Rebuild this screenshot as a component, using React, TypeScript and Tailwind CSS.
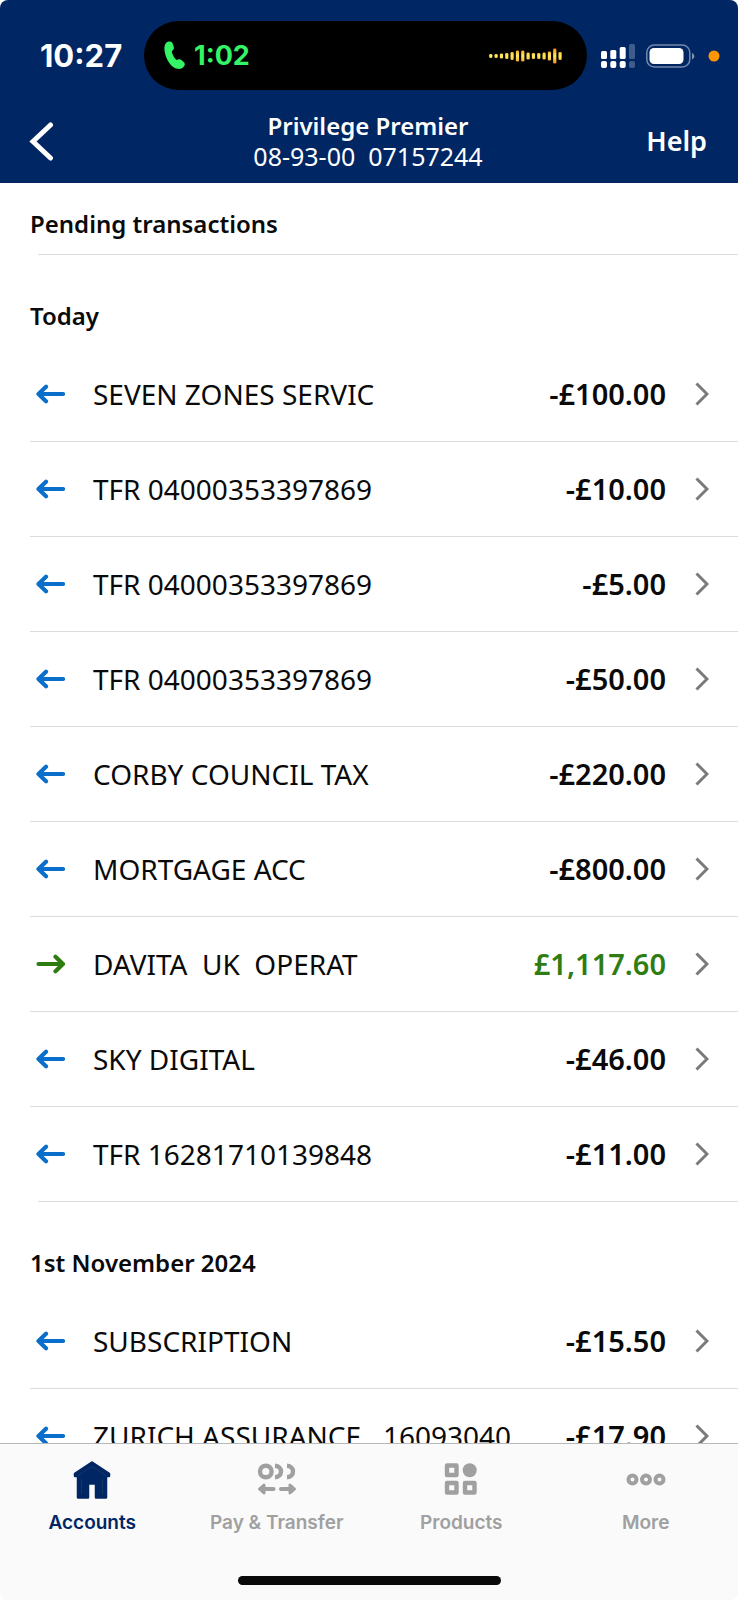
import type { ReactNode } from "react";

type Transaction = { name: string; amount: string; credit?: boolean };

const TODAY: Transaction[] = [
  { name: "SEVEN ZONES SERVIC", amount: "-£100.00" },
  { name: "TFR 04000353397869", amount: "-£10.00" },
  { name: "TFR 04000353397869", amount: "-£5.00" },
  { name: "TFR 04000353397869", amount: "-£50.00" },
  { name: "CORBY COUNCIL TAX", amount: "-£220.00" },
  { name: "MORTGAGE ACC", amount: "-£800.00" },
  { name: "DAVITA  UK  OPERAT", amount: "£1,117.60", credit: true },
  { name: "SKY DIGITAL", amount: "-£46.00" },
  { name: "TFR 16281710139848", amount: "-£11.00" },
];

const NOVEMBER: Transaction[] = [
  { name: "SUBSCRIPTION", amount: "-£15.50" },
  { name: "ZURICH ASSURANCE   16093040", amount: "-£17.90" },
];

const LEVELS = [4, 4, 5, 6, 8, 11, 11, 7, 6, 6, 7, 9, 15, 8];

function Waveform() {
  return (
    <svg width="76" height="20" viewBox="0 0 76 20" aria-hidden="true">
      <defs>
        <linearGradient id="wave" gradientUnits="userSpaceOnUse" x1="0" y1="2" x2="0" y2="18">
          <stop offset="0" stopColor="#f58a0a" />
          <stop offset="0.5" stopColor="#ffee62" />
          <stop offset="1" stopColor="#f58a0a" />
        </linearGradient>
      </defs>
      {LEVELS.map((h, i) => (
        <rect key={i} x={1.2 + i * 5.33} y={10 - h / 2} width="3.2" height={h} rx="1.3" fill="url(#wave)" />
      ))}
    </svg>
  );
}

function StatusBar() {
  return (
    <div className="flex h-[111px] items-center pl-10 pr-4">
      <span className="w-[104px] shrink-0 font-['Inter',sans-serif] text-[31px] leading-8 font-bold">10:27</span>
      <div className="flex h-[69px] flex-1 items-center justify-between rounded-full bg-black pl-5 pr-[23px]">
        <span className="flex items-center gap-[9px] font-['Inter',sans-serif] text-[27px] leading-8 font-bold text-[#33f565]">
          <svg width="21" height="29" viewBox="0 0 21 29" fill="currentColor" aria-hidden="true">
            <path d="M4.6.6C6.9-.1 8.200.9 8.800 2.800l1 3.500c.3 1.300-.2 2.300-1.300 3.200-.8.700-.8 1.400-.4 2.400.9 2.400 2.100 4.600 3.600 6.300.7.800 1.300.9 2.200.400 1.300-.7 2.500-.6 3.500.3l2.300 2.100c1.300 1.200 1.400 2.500.5 4-1.300 2.200-3.800 3.300-6.500 2.800C9.200 27.100 5.100 22.600 2.800 17.400.8 12.900-.1 8.100.7 4.700 1.200 2.600 2.600 1.200 4.600.6Z" />
          </svg>
          1:02
        </span>
        <Waveform />
      </div>
      <svg className="ml-[13px]" width="122" height="28" viewBox="0 0 122 28" aria-hidden="true">
        <g fill="#fff">
          <rect x="1" y="9" width="6" height="8" rx="1.500" />
          <rect x="10.300" y="8" width="6" height="9" rx="1.500" />
          <rect x="19.700" y="5" width="6" height="12" rx="1.500" />
          <rect x="1" y="19" width="6" height="7" rx="2" />
          <rect x="10.300" y="19" width="6" height="7" rx="2" />
          <rect x="19.700" y="19" width="6" height="7" rx="2" />
          <rect x="29" y="2" width="6" height="15" rx="1.500" opacity=".25" />
          <rect x="29" y="19" width="6" height="7" rx="2" opacity=".25" />
          <rect x="49.500" y="6" width="34" height="16" rx="4.500" />
          <path d="M92 11v6.500c1.600-.7 2.300-1.800 2.300-3.200S93.600 11.700 92 11Z" opacity=".5" />
        </g>
        <rect x="46.800" y="3" width="43" height="22" rx="7.500" fill="none" stroke="#fff" strokeWidth="1.500" opacity=".45" />
        <circle cx="114" cy="14" r="5.500" fill="#ff9500" />
      </svg>
    </div>
  );
}

function Header() {
  return (
    <header className="shrink-0 rounded-t-lg bg-[#002663] text-white">
      <StatusBar />
      <div className="grid grid-cols-[1fr_auto_1fr] items-center pb-3 pl-[29px] pr-[31px]">
        <button type="button" aria-label="Back" className="justify-self-start">
          <svg width="26" height="40" viewBox="0 0 26 40" fill="none" stroke="#fff" strokeWidth="5" strokeLinecap="round" aria-hidden="true">
            <path d="M21.500 4 4 20.500 21.500 37" strokeLinejoin="miter" />
          </svg>
        </button>
        <div className="text-center">
          <h1 className="text-2xl leading-[30px] font-semibold">Privilege Premier</h1>
          <p className="text-[25px] leading-[30px] whitespace-pre">08-93-00  07157244</p>
        </div>
        <button type="button" className="justify-self-end text-[27px] leading-8 font-semibold">
          Help
        </button>
      </div>
    </header>
  );
}

function Arrow({ credit }: { credit?: boolean }) {
  return (
    <svg
      width="30"
      height="20"
      viewBox="0 0 30 20"
      fill="none"
      stroke={credit ? "#2f7d12" : "#0a6fca"}
      strokeWidth="4.200"
      strokeLinecap="round"
      strokeLinejoin="round"
      aria-hidden="true"
    >
      <path d={credit ? "M3.500 10H28M20.500 2.800 28 10l-7.500 7.200" : "M28 10H3.500M11 2.800 3.500 10 11 17.200"} />
    </svg>
  );
}

function TransactionRow({ name, amount, credit }: Transaction) {
  return (
    <li className="group">
      <a href="#transaction" className="flex h-[94px] items-center pl-[35px] pr-[29px]">
        <Arrow credit={credit} />
        <span className="ml-7 flex-1 text-[28px] leading-9 whitespace-pre">{name}</span>
        <span className={`text-[29px] leading-9 font-semibold ${credit ? "text-[#2f7d12]" : ""}`}>{amount}</span>
        <svg className="ml-[29px]" width="14" height="24" viewBox="0 0 14 24" fill="none" stroke="#7a7a7a" strokeWidth="3" aria-hidden="true">
          <path d="M1.500 1.500 12 12 1.500 22.500" />
        </svg>
      </a>
      <div className="ml-[30px] h-px bg-[#dcdcdc] group-last:ml-[38px]" />
    </li>
  );
}

function Section({ title, items }: { title: string; items: Transaction[] }) {
  return (
    <section className="pt-[45px]">
      <h2 className="px-[30px] pb-[15px] text-2xl leading-8 font-semibold">{title}</h2>
      <ul>
        {items.map((item, i) => (
          <TransactionRow key={i} {...item} />
        ))}
      </ul>
    </section>
  );
}

function Tab({ label, active, children }: { label: string; active?: boolean; children: ReactNode }) {
  return (
    <a
      href={`#${label}`}
      aria-current={active ? "page" : undefined}
      className={`flex flex-col items-center gap-[11px] ${active ? "text-[#002663]" : "text-[#a0a0a0]"}`}
    >
      <svg width="40" height="40" viewBox="0 0 40 40" aria-hidden="true">
        {children}
      </svg>
      <span className="font-['Inter',sans-serif] text-[19px] leading-6 font-semibold">{label}</span>
    </a>
  );
}

function TabBar() {
  return (
    <nav className="shrink-0 rounded-b-lg border-t border-[#b8b8b8] bg-[#fafafa] pt-4 pb-[15px]">
      <div className="grid grid-cols-4">
        <Tab label="Accounts" active>
          <path
            d="M20 2.500 3 13.800v2.200h3V37.500h10V23.500h8v14h10V16h3v-2.200Z"
            fill="currentColor"
            stroke="currentColor"
            strokeWidth="2.500"
            strokeLinejoin="round"
          />
          <path d="M6.500 15 20 6.500 33.500 15M9.500 19v15M30.500 19v15" fill="none" stroke="#fff" strokeWidth=".5" opacity=".15" />
        </Tab>
        <Tab label="Pay & Transfer">
          <g fill="none" stroke="currentColor" strokeWidth="4.400">
            <circle cx="8.800" cy="11.500" r="5.800" />
            <path d="M18 5.700c3.700.2 6 2.600 6 5.800s-2.300 5.600-6 5.800M30 5.700c3.700.2 6 2.600 6 5.800s-2.300 5.600-6 5.800" />
            <path d="M16.500 29H5M24 29h11" strokeLinecap="round" strokeWidth="4" />
          </g>
          <path
            d="M7 25v8L2.500 29ZM33 25v8l4.500-4Z"
            fill="currentColor"
            stroke="currentColor"
            strokeWidth="3"
            strokeLinejoin="round"
          />
        </Tab>
        <Tab label="Products">
          <g fill="none" stroke="currentColor" strokeWidth="4.400" strokeLinejoin="round">
            <rect x="6" y="5.500" width="9.500" height="9.500" />
            <rect x="6" y="23" width="9.500" height="9.500" />
            <rect x="24" y="23" width="9.500" height="9.500" />
          </g>
          <circle cx="28.700" cy="10.300" r="7" fill="currentColor" />
        </Tab>
        <Tab label="More">
          <g fill="none" stroke="currentColor" strokeWidth="4">
            <circle cx="6.500" cy="19.500" r="4" />
            <circle cx="20" cy="19.500" r="4" />
            <circle cx="33.500" cy="19.500" r="4" />
          </g>
        </Tab>
      </div>
      <div className="mx-auto mt-[41px] h-[9px] w-[263px] rounded-full bg-[#0a0a0a]" />
    </nav>
  );
}

export default function App() {
  return (
    <div className="flex h-screen flex-col bg-white font-['Noto_Sans',sans-serif] text-[#0a0a0a]">
      <Header />
      <main className="min-h-0 flex-1 overflow-y-auto [scrollbar-width:none]">
        <h2 className="px-[30px] pt-[25px] pb-[14px] text-2xl leading-8 font-semibold">Pending transactions</h2>
        <div className="ml-[38px] h-px bg-[#dcdcdc]" />
        <Section title="Today" items={TODAY} />
        <Section title="1st November 2024" items={NOVEMBER} />
      </main>
      <TabBar />
    </div>
  );
}
